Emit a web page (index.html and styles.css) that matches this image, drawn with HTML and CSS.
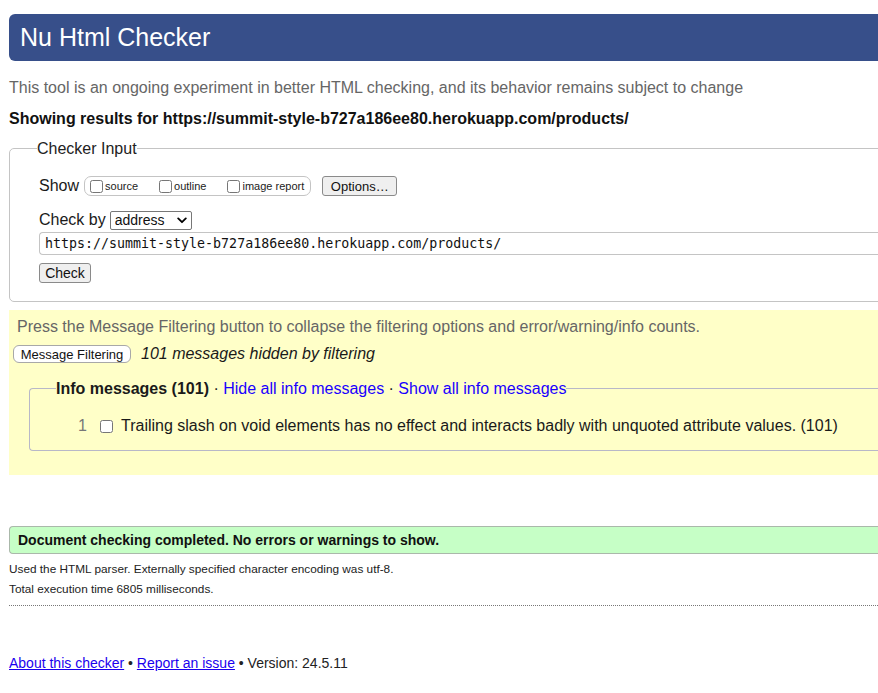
FILE: index.html
```html
<!DOCTYPE html>
<html lang="en">
<head>
<meta charset="utf-8">
<title>Nu Html Checker</title>
<link rel="stylesheet" href="styles.css">
</head>
<body>
<div class="page">
  <h1 class="title">Nu Html Checker</h1>
  <p class="intro">This tool is an ongoing experiment in better HTML checking, and its behavior remains subject to change</p>
  <p class="showing">Showing results for https://summit-style-b727a186ee80.herokuapp.com/products/</p>

  <fieldset class="checker">
    <legend class="checker-legend">Checker Input</legend>
    <div class="row row-show">
      <span class="label">Show</span>
      <fieldset class="show-opts">
        <label class="opt"><input type="checkbox" class="cb"><span>source</span></label>
        <label class="opt"><input type="checkbox" class="cb"><span>outline</span></label>
        <label class="opt"><input type="checkbox" class="cb"><span>image report</span></label>
      </fieldset>
      <button class="btn btn-options" type="button">Options…</button>
    </div>
    <div class="row row-by">
      <span class="label">Check by</span>
      <span class="select-wrap">
        <select class="select"><option>address</option></select>
        <svg class="chev" width="10" height="7" viewBox="0 0 10 7"><path d="M1.2 1.4 L5 5.2 L8.8 1.4" fill="none" stroke="#000" stroke-width="1.8" stroke-linecap="round" stroke-linejoin="round"/></svg>
      </span>
    </div>
    <div class="url">https://summit-style-b727a186ee80.herokuapp.com/products/</div>
    <div class="row row-check">
      <button class="btn btn-check" type="button">Check</button>
    </div>
  </fieldset>

  <section class="filters">
    <p class="filters-note">Press the Message Filtering button to collapse the filtering options and error/warning/info counts.</p>
    <div class="filters-bar">
      <button class="btn btn-filter" type="button">Message Filtering</button>
      <em class="hidden-count">101 messages hidden by filtering</em>
    </div>
    <fieldset class="info">
      <legend class="info-legend"><strong>Info messages (101)</strong> · <a href="#" class="lnk">Hide all info messages</a> · <a href="#" class="lnk">Show all info messages</a></legend>
      <div class="info-row">
        <span class="num">1</span>
        <input type="checkbox" class="cb cb-big">
        <span class="msg">Trailing slash on void elements has no effect and interacts badly with unquoted attribute values. (101)</span>
      </div>
    </fieldset>
  </section>

  <p class="success">Document checking completed. No errors or warnings to show.</p>
  <p class="details">Used the HTML parser. Externally specified character encoding was utf-8.</p>
  <p class="details details-2">Total execution time 6805 milliseconds.</p>
  <hr class="dots">

  <p class="footer"><a href="#" class="flink">About this checker</a> • <a href="#" class="flink">Report an issue</a> • Version: 24.5.11</p>
</div>
</body>
</html>
```

FILE: styles.css
```css
html {
  overflow-x: hidden;
}
body {
  margin: 0;
  padding: 14px 0 0 9px;
  font-family: "Liberation Sans", Arial, Helvetica, sans-serif;
  color: #1a1a1a;
  background: #fff;
}
.page {
  margin-right: -60px;
}
.title {
  margin: 0;
  height: 47px;
  line-height: 47px;
  padding-left: 11px;
  font-size: 25px;
  font-weight: normal;
  color: #fff;
  background: #374f8a;
  border-radius: 6px 0 0 6px;
}
.intro {
  margin: 17px 0 0;
  font-size: 16px;
  line-height: 20px;
  color: #666;
}
.showing {
  margin: 11px 0 0;
  font-size: 16px;
  line-height: 20px;
  font-weight: bold;
  color: #111;
}
.checker {
  margin: 10px 0 0;
  padding: 0 0 18px 29px;
  border: 1px solid #c4c4c4;
  border-radius: 5px;
  min-inline-size: 0;
}
.checker-legend {
  padding: 0;
  margin-left: -2px;
  font-size: 16px;
  line-height: 19px;
  color: #222;
}
.row {
  display: flex;
  align-items: center;
  height: 20px;
}
.row-show {
  margin-top: 18px;
}
.label {
  font-size: 16px;
  line-height: 20px;
  color: #1a1a1a;
}
.show-opts {
  display: flex;
  align-items: center;
  margin: 0 0 0 5px;
  padding: 0 6px 0 5px;
  height: 18px;
  border: 1px solid #c4c4c4;
  border-radius: 7px;
  min-inline-size: 0;
}
.opt {
  display: flex;
  align-items: center;
  font-size: 11px;
  color: #222;
  margin-right: 21px;
}
.opt:last-child {
  margin-right: 0;
}
.cb {
  margin: 0 2px 0 0;
  width: 13px;
  height: 13px;
}
.btn {
  font-family: "Liberation Sans", Arial, Helvetica, sans-serif;
  color: #111;
  background: #efefef;
  border: 1px solid #8a8a8a;
  border-radius: 3px;
  padding: 0;
  height: 20px;
}
.btn-options {
  margin-left: 11px;
  width: 75px;
  font-size: 13px;
}
.row-by {
  margin-top: 14px;
}
.select-wrap {
  position: relative;
  display: inline-block;
  margin-left: 4px;
}
.select {
  appearance: none;
  -webkit-appearance: none;
  width: 82px;
  height: 19px;
  padding: 0 0 0 4px;
  font-family: "Liberation Sans", Arial, Helvetica, sans-serif;
  font-size: 14px;
  line-height: 17px;
  color: #111;
  background: #fff;
  border: 1px solid #777;
  border-radius: 2px;
  display: block;
}
.chev {
  position: absolute;
  right: 5px;
  top: 6px;
}
.url {
  margin-top: 2px;
  height: 23px;
  box-sizing: border-box;
  line-height: 21px;
  padding-left: 5px;
  font-family: "DejaVu Sans Mono", "Liberation Mono", monospace;
  font-size: 13.3px;
  color: #111;
  border: 1px solid #c4c4c4;
  border-right: 0;
  border-radius: 4px 0 0 4px;
  white-space: nowrap;
}
.row-check {
  margin-top: 8px;
}
.btn-check {
  width: 52px;
  font-size: 14px;
}
.filters {
  margin-top: 8px;
  padding: 7px 0 24px 8px;
  background: #ffffc8;
}
.filters-note {
  margin: 0;
  font-size: 16px;
  line-height: 20px;
  color: #666;
}
.filters-bar {
  display: flex;
  align-items: center;
  margin: 8px 0 0 -4px;
  height: 18px;
}
.btn-filter {
  height: 18px;
  width: 118px;
  font-size: 13px;
  background: #fff;
  border: 1px solid #a8a8a8;
  border-radius: 6px;
}
.hidden-count {
  margin-left: 10px;
  font-size: 16px;
  line-height: 20px;
  color: #1a1a1a;
}
.info {
  margin: 16px 0 0 12px;
  padding: 0 0 14px 26px;
  border: 1px solid #b8b8c8;
  border-right: 0;
  border-radius: 4px 0 0 4px;
  min-inline-size: 0;
}
.info-legend {
  padding: 0;
  font-size: 16px;
  line-height: 19px;
  color: #1a1a1a;
}
.lnk {
  color: #1a00ff;
  text-decoration: none;
}
.info-row {
  display: flex;
  align-items: center;
  margin-top: 18px;
  height: 20px;
  font-size: 16px;
}
.num {
  width: 10px;
  margin-left: 22px;
  color: #777;
}
.cb-big {
  margin: 0 0 0 12px;
}
.msg {
  margin-left: 8px;
  color: #1a1a1a;
  white-space: nowrap;
}
.success {
  margin: 51px 0 0;
  height: 28px;
  box-sizing: border-box;
  padding-left: 8px;
  font-size: 14px;
  line-height: 26px;
  font-weight: bold;
  color: #111;
  background: #c6ffc6;
  border: 1px solid #aab8aa;
  border-right: 0;
  border-radius: 4px 0 0 4px;
}
.details {
  margin: 8px 0 0;
  font-size: 11.8px;
  line-height: 14px;
  color: #222;
}
.details-2 {
  margin-top: 6px;
}
.dots {
  margin: 9px 0 0;
  border: 0;
  border-top: 1px dotted #777;
  height: 0;
}
.footer {
  margin: 48px 0 0;
  font-size: 14px;
  line-height: 18px;
  color: #222;
}
.flink {
  color: #1a00ee;
  text-decoration: underline;
}
```
